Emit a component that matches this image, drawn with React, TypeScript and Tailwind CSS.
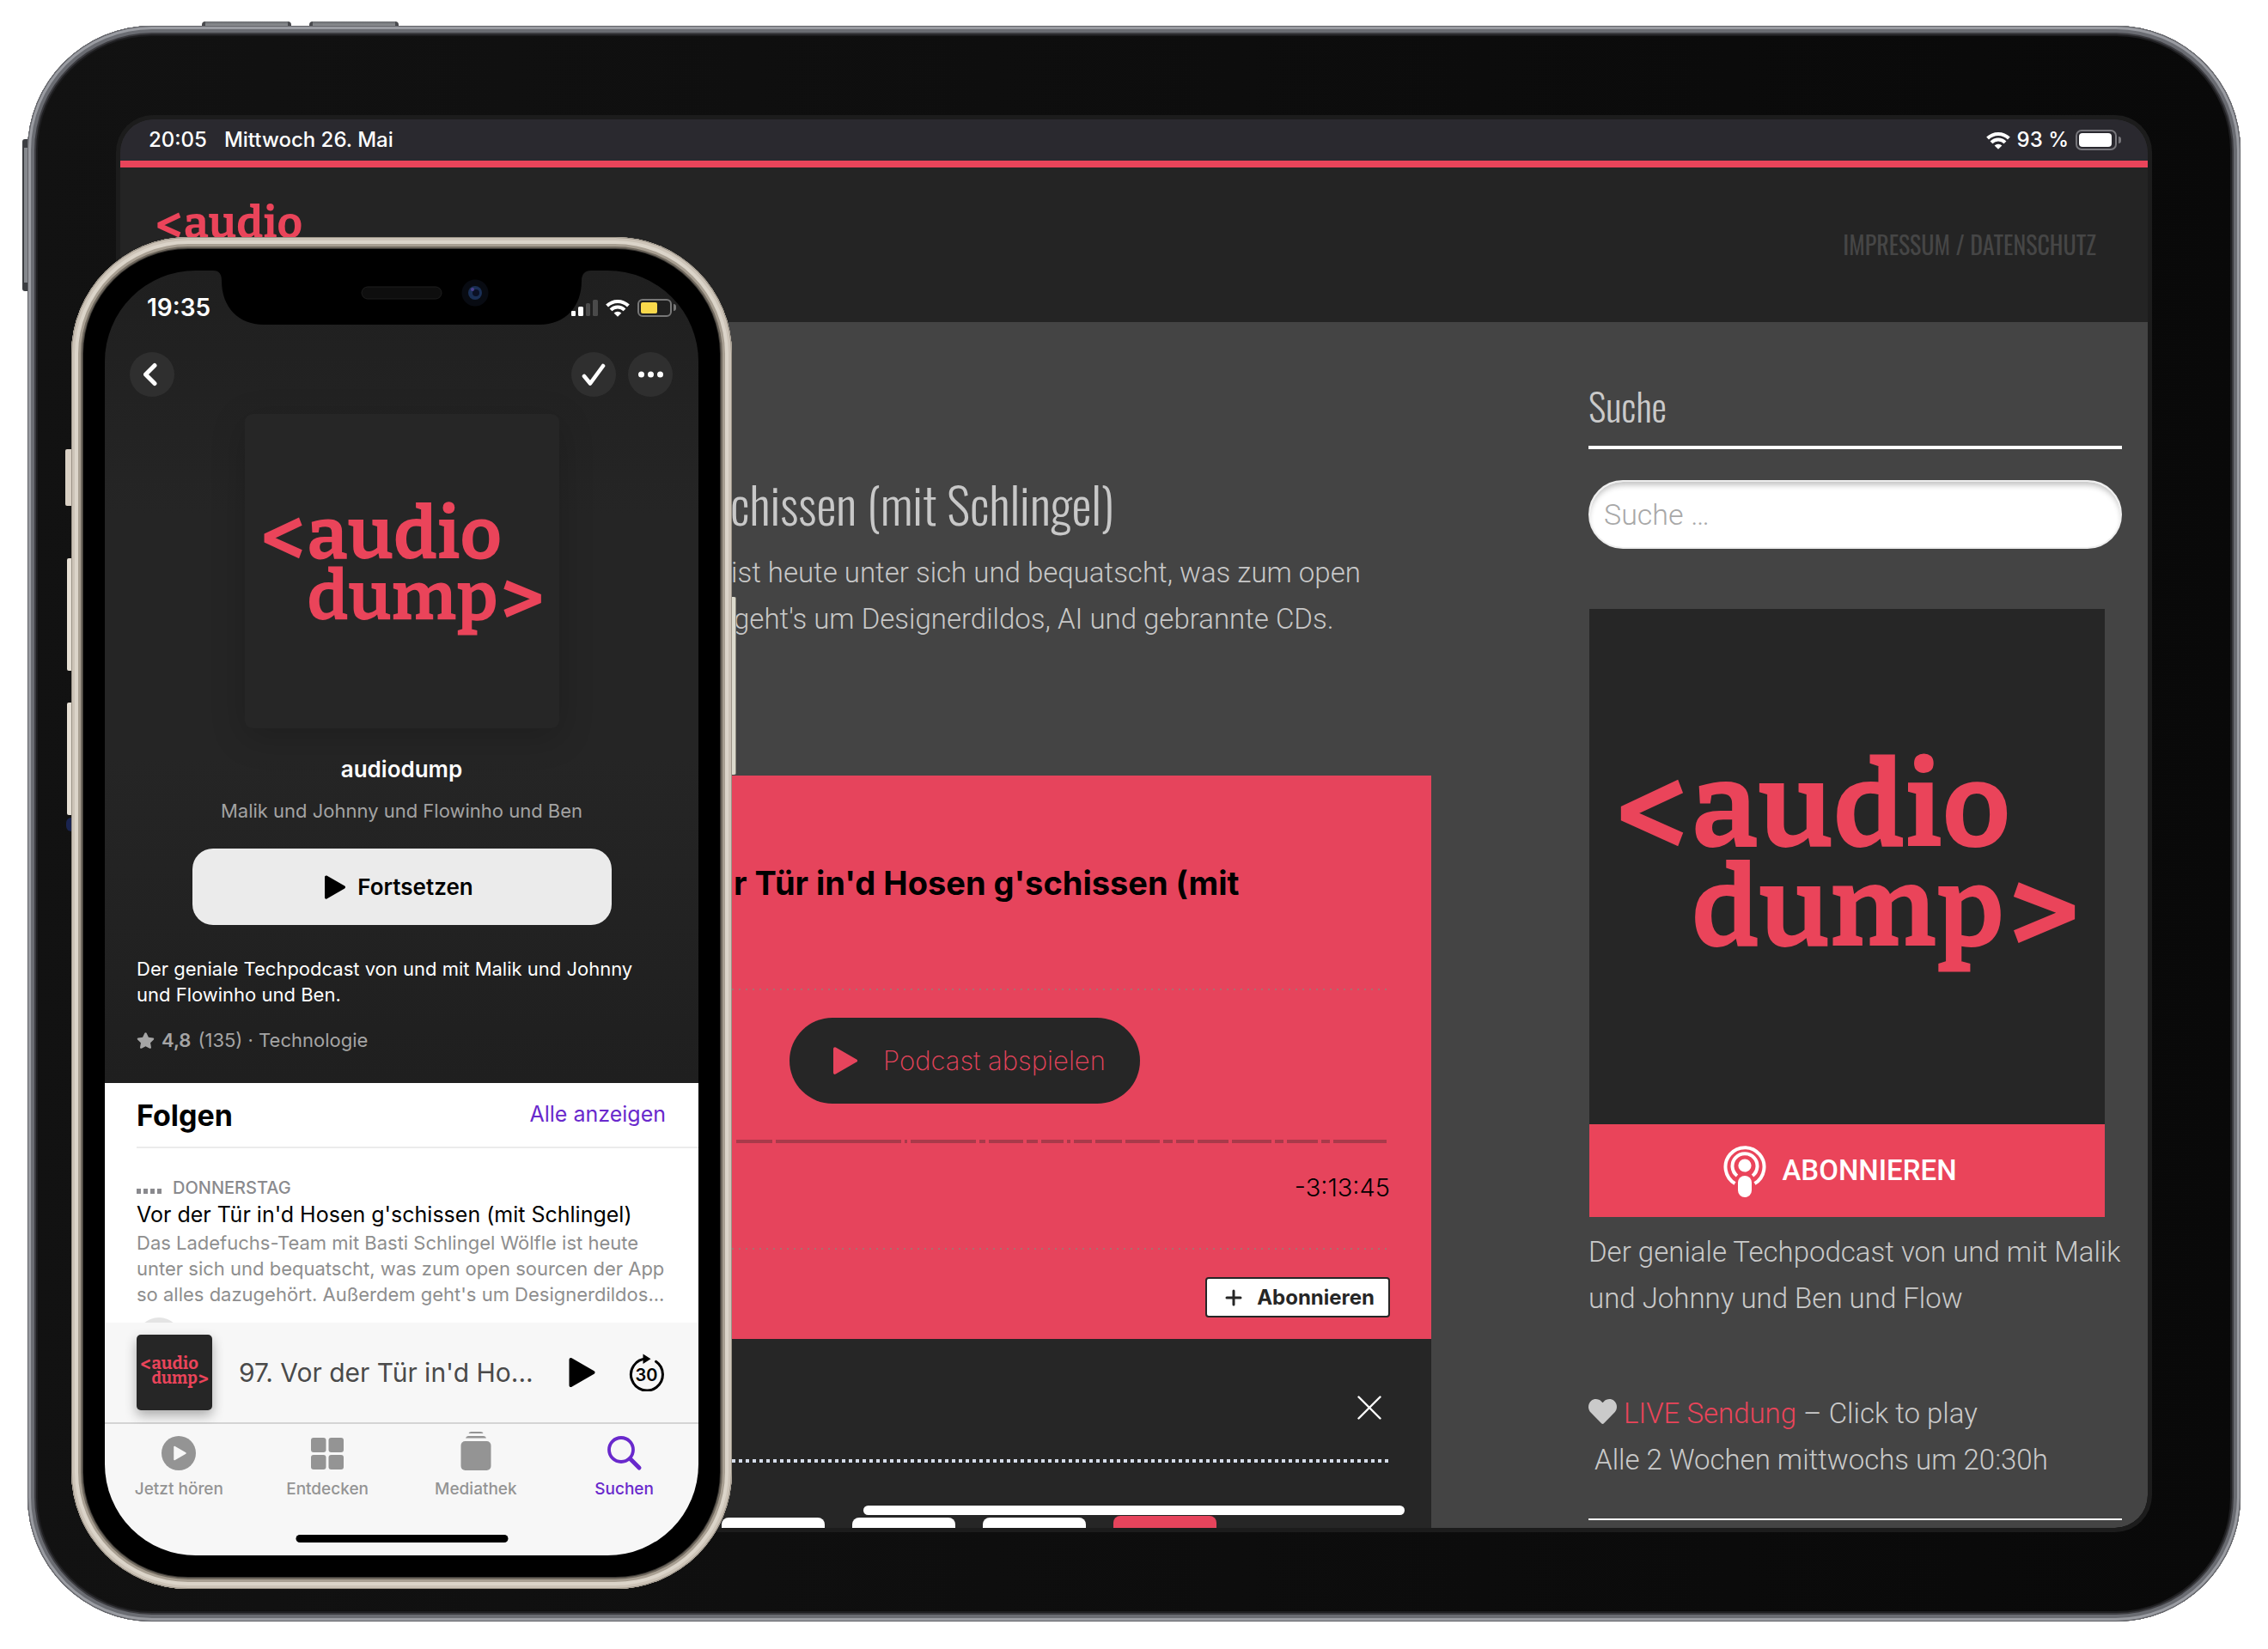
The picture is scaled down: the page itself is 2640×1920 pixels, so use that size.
import React from "react";
import { FaHeart, FaStar } from "react-icons/fa";

const CONDENSED = "font-['Oswald','Roboto_Condensed','DejaVu_Sans_Condensed',sans-serif]";

function LogoArt({ className, viewBox = "0 0 600 600" }: { className: string; viewBox?: string }) {
  return (
    <svg className={className} viewBox={viewBox} role="img" aria-label="audiodump Logo" fill="#ea445a">
      <g fontFamily="'Bitter', 'DejaVu Serif', serif" fontWeight="700">
        <text x="31" y="294" fontSize="158">&lt;</text>
        <text x="119" y="276" fontSize="138">audio</text>
        <text x="119" y="392" fontSize="130">dump</text>
        <text x="571" y="410" fontSize="158" textAnchor="end">&gt;</text>
      </g>
    </svg>
  );
}

function Wifi({ className }: { className: string }) {
  return (
    <svg className={className} viewBox="0 0 28 21" fill="none" stroke="#fff" strokeWidth="4">
      <path d="M1.600 8a17.600 17.600 0 0 1 24.800 0" />
      <path d="M6 12.800a11.300 11.300 0 0 1 16 0" />
      <path d="M14 20.800l-4.400-4.300a6.300 6.300 0 0 1 8.800 0z" fill="#fff" stroke="none" />
    </svg>
  );
}

function PlayShape({ className }: { className: string }) {
  return (
    <svg className={className} viewBox="0 0 30 34" fill="currentColor" stroke="currentColor" strokeWidth="4" strokeLinejoin="round">
      <path d="M2 2l26 15-26 15z" />
    </svg>
  );
}

const chapters = [42, 146, 3, 76, 7, 40, 13, 26, 4, 21, 31, 40, 11, 21, 36, 46, 10, 36, 10, 62];

function TabletStatus() {
  return (
    <div className="flex h-12 shrink-0 items-center justify-between bg-[#2a292f] pr-[31px] pl-[33px] font-['Inter',sans-serif] text-[24px] font-medium text-white">
      <div className="flex gap-5">
        <span>20:05</span>
        <span>Mittwoch 26. Mai</span>
      </div>
      <div className="flex items-center gap-2">
        <Wifi className="h-[21px] w-7" />
        <span>93 %</span>
        <span className="flex items-center gap-[2px]">
          <span className="block h-6 w-12 rounded-[7px] border-2 border-[#77767b] p-[2px]">
            <span className="block h-full w-[38px] rounded-[4px] bg-white" />
          </span>
          <span className="block h-2 w-[3px] rounded-r-full bg-[#77767b]" />
        </span>
      </div>
    </div>
  );
}

function SiteHeader() {
  return (
    <header className="flex h-[180px] shrink-0 items-center justify-between bg-[#242424] pr-[60px] pl-[41px]">
      <a href="#start">
        <LogoArt className="h-[97px] w-[203px]" viewBox="30 170 546 260" />
      </a>
      <a href="#impressum" className={"text-[28px] text-[#464646] " + CONDENSED}>
        IMPRESSUM / DATENSCHUTZ
      </a>
    </header>
  );
}

function Player() {
  return (
    <section className="w-full">
      <div className="bg-[#e6445c] pt-[100px] pr-12 pb-[25px]">
        <h2 className="pl-[274px] font-['Inter',sans-serif] text-[38px] leading-[50px] font-bold whitespace-nowrap text-black">
          r Tür in'd Hosen g'schissen (mit
        </h2>
        <div className="mt-[98px] h-[2px] bg-[repeating-linear-gradient(90deg,#a9706f_0_2px,transparent_2px_8px)]" />
        <button className="mt-8 ml-[339px] flex h-[100px] w-[408px] items-center rounded-full bg-[#262626] pl-[51px] font-['Inter',sans-serif] text-[31px] font-extralight text-[#e6445c]">
          <PlayShape className="mr-[30px] h-8 w-7" />
          Podcast abspielen
        </button>
        <div className="mt-[42px] flex h-1 justify-end gap-1 pr-1">
          {chapters.map((w, i) => (
            <span key={i} className="block h-full bg-[#a93a4a]" style={{ width: w }} />
          ))}
        </div>
        <p className="mt-[35px] text-right font-['Inter',sans-serif] text-[29px] leading-[34px] font-light text-black">-3:13:45</p>
        <div className="mt-[53px] h-[2px] bg-[repeating-linear-gradient(90deg,#a9706f_0_2px,transparent_2px_8px)]" />
        <button className="mt-8 ml-auto flex h-[47px] w-[215px] items-center justify-between rounded-[4px] border-2 border-[#262626] bg-white pr-4 pl-[21px] font-['Inter',sans-serif] text-[24px] font-bold text-[#262626]">
          <svg className="size-5" viewBox="0 0 20 20" stroke="currentColor" strokeWidth="3" strokeLinecap="round">
            <path d="M10 2v16M2 10h16" />
          </svg>
          Abonnieren
        </button>
      </div>
      <div className="h-[240px] bg-[#262626] pt-[66px]">
        <button aria-label="Schließen" className="mr-[58px] ml-auto block text-white">
          <svg className="size-7" viewBox="0 0 28 28" stroke="currentColor" strokeWidth="2.400" strokeLinecap="round">
            <path d="M1.500 1.500l25 25M26.500 1.500l-25 25" />
          </svg>
        </button>
        <div className="mt-[46px] mr-12 ml-12 h-1 bg-[repeating-linear-gradient(90deg,#d5dcea_0_4px,transparent_4px_8px)]" />
        <div className="mt-[62px] flex justify-end gap-8 pr-[250px]">
          <span className="mt-[2px] block h-14 w-[120px] rounded-t-[8px] bg-white" />
          <span className="mt-[2px] block h-14 w-[120px] rounded-t-[8px] bg-white" />
          <span className="mt-[2px] block h-14 w-[120px] rounded-t-[8px] bg-white" />
          <span className="block h-14 w-[120px] rounded-t-[8px] bg-[#e6445c]" />
        </div>
      </div>
    </section>
  );
}

function Sidebar() {
  return (
    <aside className="w-[621px] shrink-0 pt-[58px] font-['Roboto',sans-serif] text-[33px] leading-[54px] font-light text-[#cacaca]">
      <h3 className={"border-b-4 border-white pb-[6px] text-[44px] leading-[80px] font-light " + CONDENSED}>Suche</h3>
      <input
        type="search"
        aria-label="Suche"
        placeholder="Suche …"
        className="mt-9 block h-20 w-full rounded-full border-2 border-[#eee] bg-white px-4 text-[34px] shadow-[inset_0_6px_6px_-2px_#c4c4c4] outline-none placeholder:text-[#a8a8a8]"
      />
      <div className="mt-[70px] ml-[1px] w-[600px]">
        <LogoArt className="block aspect-square w-full bg-[#262626]" />
        <a href="#abonnieren" className="flex h-[108px] items-center justify-center gap-[18px] bg-[#ea445a] pr-4 text-[33px] font-medium text-white">
          <svg className="h-[62px] w-[50px]" viewBox="0 0 50 62" fill="none" stroke="#fff" strokeWidth="4">
            <path d="M13.500 46A22.500 22.500 0 1 1 36.500 46" />
            <path d="M16 37A14.500 14.500 0 1 1 34 37" />
            <circle cx="25" cy="25" r="7.600" fill="#fff" stroke="none" />
            <rect x="17" y="37" width="16" height="25" rx="8" fill="#fff" stroke="none" />
          </svg>
          ABONNIEREN
        </a>
      </div>
      <p className="mt-[14px]">Der geniale Techpodcast von und mit Malik und Johnny und Ben und Flow</p>
      <p className="mt-20 border-b-2 border-white pb-[41px]">
        <FaHeart className="mr-2 inline-block size-[33px] align-[-3px]" />
        <a href="#live" className="text-[#ea445a]">LIVE Sendung</a> – Click to play
        <br />
        <span className="ml-[7px]">Alle 2 Wochen mittwochs um 20:30h</span>
      </p>
    </aside>
  );
}

function Tablet() {
  return (
    <div className="relative">
      <div className="absolute -top-[5px] left-[203px] h-3 w-[104px] rounded-t-[4px] border-x-4 border-[#4a4b4f] bg-linear-to-b from-[#6b6d71] to-[#c3c6c9]" />
      <div className="absolute -top-[5px] left-[328px] h-3 w-[104px] rounded-t-[4px] border-x-4 border-[#4a4b4f] bg-linear-to-b from-[#6b6d71] to-[#c3c6c9]" />
      <div className="absolute top-[132px] -left-[6px] h-[177px] w-3 rounded-l-[3px] border-y-[10px] border-l-2 border-[#3c3e42] bg-[#85888d]" />
      <div className="relative rounded-[145px] bg-linear-to-r from-[#121212] to-[#090909] px-[108px] py-[109px] shadow-[inset_0_0_0_1px_#606166,inset_0_0_0_4px_#9a9ca2,inset_0_0_0_8px_#6a6c72,inset_0_0_0_10px_#3c3c40,inset_0_0_0_12px_#1e1e20]">
        <div className="relative flex aspect-[2360/1640] flex-col overflow-hidden rounded-[38px] bg-[#444]">
          <TabletStatus />
          <div className="h-2 shrink-0 bg-[#ea445a]" />
          <SiteHeader />
          <div className="flex gap-[183px] pr-[30px]">
            <main className="ml-auto w-full max-w-[1086px] pt-[171px] text-[#c8c8c8]">
              <h1 className={"pl-[270px] text-[58px] leading-[80px] font-light whitespace-nowrap " + CONDENSED}>
                chissen (mit Schlingel)
              </h1>
              <p className="mt-[14px] pl-[271px] font-['Roboto',sans-serif] text-[33px] leading-[54px] font-light whitespace-nowrap">
                ist heute unter sich und bequatscht, was zum open
                <br />
                <span className="ml-[3px]">geht's um Designerdildos, AI und gebrannte CDs.</span>
              </p>
              <div className="mt-[155px]">
                <Player />
              </div>
            </main>
            <Sidebar />
          </div>
          <div className="absolute bottom-[15px] left-1/2 h-[11px] w-[630px] -translate-x-1/2 rounded-full bg-white" />
        </div>
        <div className="pointer-events-none absolute inset-x-[108px] inset-y-[109px] rounded-[38px] shadow-[0_0_0_5px_#1c1c1c]" />
      </div>
    </div>
  );
}

function Notch() {
  return (
    <svg className="absolute top-0 left-[126px] h-16 w-[440px]" viewBox="0 0 440 64">
      <path d="M0 0H440C433 0 429 4 429 12C429 42 410 63 380 63H59C29 63 10 42 10 12C10 4 7 0 0 0Z" fill="#000" />
      <rect x="173" y="19" width="93" height="14" rx="7" fill="#0e0e0e" stroke="#1e1e1e" />
      <circle cx="305" cy="26" r="15.500" fill="#080b12" />
      <circle cx="305" cy="26" r="8" fill="#1a2f55" />
      <circle cx="306" cy="26" r="4" fill="#0b1024" />
      <circle cx="302" cy="22" r="2" fill="#4a3f8f" />
    </svg>
  );
}

function RoundButton({ label, children }: { label: string; children: React.ReactNode }) {
  return (
    <button aria-label={label} className="flex size-[52px] items-center justify-center rounded-full bg-[#2f2f2f] text-white">
      {children}
    </button>
  );
}

function PhoneStatus() {
  return (
    <div className="flex h-[86px] items-center justify-between pr-[26px] pl-[49px]">
      <span className="font-['Inter',sans-serif] text-[28px] font-semibold text-white">19:35</span>
      <div className="flex items-center gap-[9px]">
        <svg className="h-[21px] w-[31px]" viewBox="0 0 31 21" fill="#fff">
          <rect x="0" y="14" width="5" height="6" rx="1" />
          <rect x="8" y="9" width="6" height="11" rx="1.500" />
          <rect x="17" y="5" width="5" height="15" rx="1.500" fill="#4a4a4a" />
          <rect x="25" y="1" width="6" height="19" rx="1.500" fill="#4a4a4a" />
        </svg>
        <Wifi className="h-[21px] w-7" />
        <span className="flex items-center gap-[2px]">
          <span className="block h-[21px] w-10 rounded-[6px] border-2 border-[#777] p-[2px]">
            <span className="block h-full w-[19px] rounded-[2px] bg-[#f8d84b]" />
          </span>
          <span className="block h-2 w-[3px] rounded-r-full bg-[#777]" />
        </span>
      </div>
    </div>
  );
}

function TabItem({ label, active = false, children }: { label: string; active?: boolean; children: React.ReactNode }) {
  return (
    <button className={"flex flex-col items-center gap-[9px] " + (active ? "text-[#6929cc]" : "text-[#949494]")}>
      {children}
      <span className="text-[19px] leading-[22px] font-medium">{label}</span>
    </button>
  );
}

function Phone() {
  return (
    <div className="absolute top-[276px] left-[83px] w-[769px]">
      <div className="absolute top-[247px] -left-[7px] h-[66px] w-3 rounded-l-[2px] bg-[#d9d0c4]" />
      <div className="absolute top-[374px] -left-[5px] h-[131px] w-3 rounded-l-[2px] bg-[#e6dfd4]" />
      <div className="absolute top-[542px] -left-[5px] h-[131px] w-3 rounded-l-[2px] bg-[#e6dfd4]" />
      <div className="absolute top-[676px] -left-[6px] h-4 w-3 rounded-full bg-[#1a2450]" />
      <div className="absolute top-[419px] -right-[5px] h-[207px] w-3 rounded-r-[2px] border-r border-[#8b877c] bg-[#dcdacd]" />
      <div className="relative rounded-[136px] bg-black px-[39px] py-[39px] shadow-[inset_0_0_0_1px_#9b9387,inset_0_0_0_4px_#cdc4b8,inset_0_0_0_8px_#dbd4c9,inset_0_0_0_11px_#a89f92,inset_0_0_0_13px_#6f685e,inset_0_0_0_14px_#3a3733]">
        <div className="relative flex aspect-[691/1496] flex-col overflow-hidden rounded-[106px] bg-black font-['Inter',sans-serif]">
          <section className="shrink-0 bg-[linear-gradient(#1f1f1f,#252525_30%,#252525_60%,#1f1f1f)] pb-[35px]">
            <PhoneStatus />
            <div className="mt-[9px] flex items-center gap-[14px] pr-[30px] pl-[29px]">
              <RoundButton label="Zurück">
                <svg className="mr-1 h-7 w-4" viewBox="0 0 16 28" fill="none" stroke="currentColor" strokeWidth="5" strokeLinecap="round" strokeLinejoin="round">
                  <path d="M13 3.500L2.500 14 13 24.500" />
                </svg>
              </RoundButton>
              <span className="flex-1" />
              <RoundButton label="Abonniert">
                <svg className="h-[27px] w-7" viewBox="0 0 28 27" fill="none" stroke="currentColor" strokeWidth="4.600" strokeLinecap="round" strokeLinejoin="round">
                  <path d="M3 15l7 8.500L25 3" />
                </svg>
              </RoundButton>
              <RoundButton label="Mehr">
                <svg className="h-2 w-[29px]" viewBox="0 0 29 8" fill="currentColor">
                  <circle cx="3.500" cy="4" r="3.500" />
                  <circle cx="14.500" cy="4" r="3.500" />
                  <circle cx="25.500" cy="4" r="3.500" />
                </svg>
              </RoundButton>
            </div>
            <LogoArt className="mx-auto mt-5 block size-[366px] rounded-[9px] bg-[#262626] shadow-[0_10px_40px_#00000030]" />
            <h2 className="mt-8 text-center text-[26px] leading-8 font-semibold text-white">audiodump</h2>
            <p className="mt-[17px] text-center text-[22px] leading-[30px] text-[#a3a3a3]">Malik und Johnny und Flowinho und Ben</p>
            <button className="mx-auto mt-[29px] flex h-[89px] w-[488px] items-center justify-center gap-[14px] rounded-[24px] bg-[#ebebeb] pr-[6px] text-[26px] font-semibold text-black">
              <PlayShape className="h-7 w-6" />
              Fortsetzen
            </button>
            <p className="mt-9 px-[37px] text-[22px] leading-[30px] text-white">
              Der geniale Techpodcast von und mit Malik und Johnny und Flowinho und Ben.
            </p>
            <p className="mt-[23px] flex items-center gap-2 px-[37px] text-[22px] leading-[30px] text-[#a5a5a5]">
              <FaStar className="size-[21px]" />
              <b className="font-semibold">4,8</b>
              <span>(135) · Technologie</span>
            </p>
          </section>
          <section className="min-h-0 flex-1 overflow-hidden bg-white pl-[37px]">
            <div className="flex h-[74px] items-center justify-between pr-[38px]">
              <h3 className="text-[34px] font-bold text-black">Folgen</h3>
              <a href="#folgen" className="text-[25px] text-[#6929cc]">Alle anzeigen</a>
            </div>
            <article className="border-t-2 border-[#ebebeb] pt-[34px] pr-8">
              <p className="flex items-center gap-[13px] text-[20px] leading-6 font-medium text-[#8a8a8e]">
                <span className="mt-2 flex gap-[3px]">
                  <span className="block h-[6px] w-[5px] bg-[#8a8a8e]" />
                  <span className="block h-[6px] w-[5px] bg-[#8a8a8e]" />
                  <span className="block h-[6px] w-[5px] bg-[#8a8a8e]" />
                  <span className="block h-[6px] w-[5px] bg-[#8a8a8e]" />
                </span>
                DONNERSTAG
              </p>
              <h4 className="mt-[3px] text-[25px] leading-8 whitespace-nowrap text-black">Vor der Tür in'd Hosen g'schissen (mit Schlingel)</h4>
              <p className="mt-[2px] text-[22px] leading-[30px] whitespace-nowrap text-[#8e8e8e]">
                Das Ladefuchs-Team mit Basti Schlingel Wölfle ist heute
                <br />
                unter sich und bequatscht, was zum open sourcen der App
                <br />
                so alles dazugehört. Außerdem geht's um Designerdildos...
              </p>
              <div className="mt-3 size-[52px] rounded-full bg-[#e4e4e4]" />
            </article>
          </section>
          <div className="flex h-[118px] shrink-0 items-center border-b-2 border-[#d4d4d4] bg-[#f7f7f7] pr-10 pl-[37px]">
            <LogoArt className="size-[88px] rounded-[5px] bg-[#262626] shadow-[0_6px_14px_#00000050]" />
            <span className="flex-1 pl-[31px] text-[30px] whitespace-nowrap text-[#4a4a4a]">97. Vor der Tür in'd Ho...</span>
            <button aria-label="Wiedergabe" className="mr-[39px] text-black">
              <PlayShape className="h-[34px] w-[31px]" />
            </button>
            <button aria-label="30 Sekunden vor" className="text-black">
              <svg className="h-11 w-[41px]" viewBox="0 0 41 44" fill="none" stroke="currentColor" strokeWidth="3" strokeLinecap="round">
                <path d="M31.500 9.300A18.500 18.500 0 1 1 20.500 6" />
                <path d="M16.500 0.500V12L25.500 6.200z" fill="currentColor" stroke="none" />
                <text x="20.500" y="32" textAnchor="middle" fontSize="20" fontWeight="600" fill="currentColor" stroke="none" fontFamily="Inter, sans-serif">30</text>
              </svg>
            </button>
          </div>
          <nav className="grid h-[153px] shrink-0 grid-cols-4 content-start bg-[#f7f7f7] pt-3">
            <TabItem label="Jetzt hören">
              <svg className="size-11" viewBox="0 0 44 44" fill="currentColor">
                <circle cx="22" cy="22" r="20" />
                <path d="M17 14.500v15l13-7.500z" fill="#f7f7f7" stroke="#f7f7f7" strokeWidth="1.500" strokeLinejoin="round" />
              </svg>
            </TabItem>
            <TabItem label="Entdecken">
              <svg className="size-11" viewBox="0 0 44 44" fill="currentColor">
                <rect x="3" y="4" width="17.500" height="17" rx="3" />
                <rect x="23.500" y="4" width="17.500" height="17" rx="3" />
                <rect x="3" y="24" width="17.500" height="17" rx="3" />
                <rect x="23.500" y="24" width="17.500" height="17" rx="3" />
              </svg>
            </TabItem>
            <TabItem label="Mediathek">
              <svg className="size-11 overflow-visible" viewBox="0 0 44 44" fill="currentColor">
                <path d="M13.500 -1q.5-2 3-2h11q2.500 0 3 2z" />
                <path d="M10 4.500q.5-2.500 3-2.500h18q2.500 0 3 2.500z" />
                <rect x="4.500" y="8" width="35" height="34" rx="5" />
              </svg>
            </TabItem>
            <TabItem label="Suchen" active>
              <svg className="size-11" viewBox="0 0 44 44" fill="none" stroke="currentColor">
                <circle cx="18" cy="18" r="14" strokeWidth="3.800" />
                <path d="M28.500 28.500L39 39" strokeWidth="5" strokeLinecap="round" />
              </svg>
            </TabItem>
          </nav>
          <div className="absolute bottom-[15px] left-1/2 h-[9px] w-[247px] -translate-x-1/2 rounded-full bg-black" />
          <Notch />
        </div>
      </div>
    </div>
  );
}

export default function App() {
  return (
    <div className="relative min-h-screen overflow-hidden bg-white px-8 pt-[30px] pb-8">
      <Tablet />
      <Phone />
    </div>
  );
}
